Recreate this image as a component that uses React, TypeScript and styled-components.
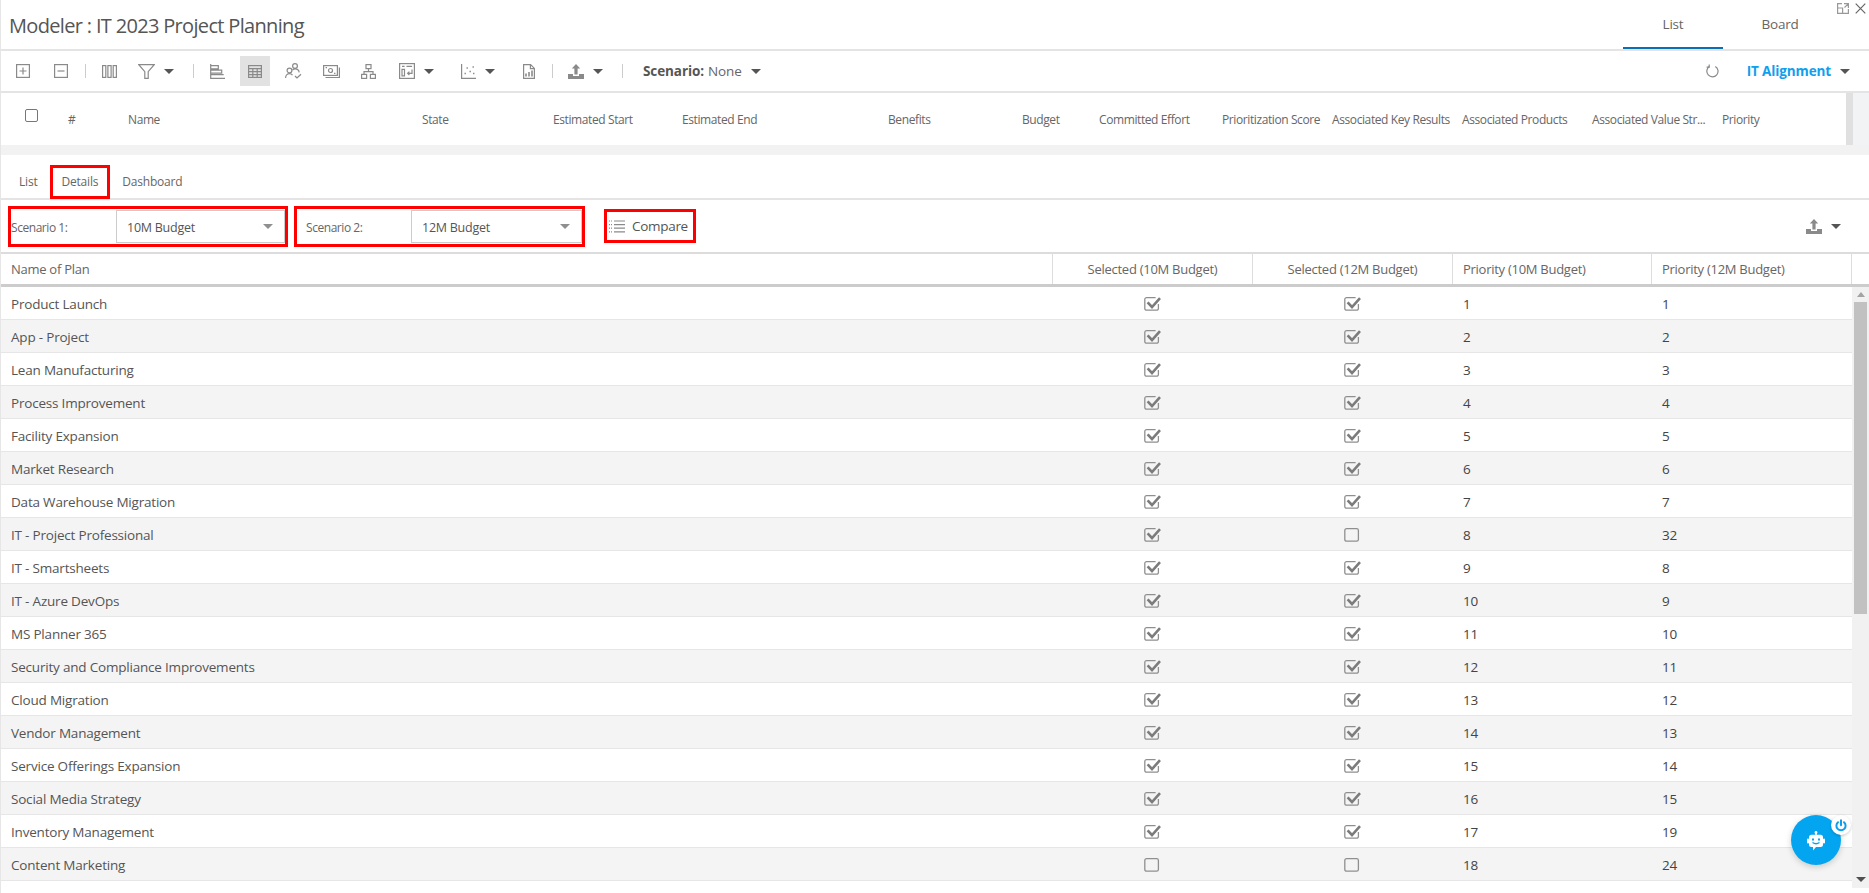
import * as React from 'react'
import styled, { createGlobalStyle } from 'styled-components'

const GlobalStyle = createGlobalStyle`
  html, body {
    margin: 0;
    padding: 0;
    background: #fff;
  }
  body {
    font-family: "Open Sans", "Noto Sans", "Liberation Sans", sans-serif;
    color: #555;
  }
  * { box-sizing: border-box; }
`

const Page = styled.div`
  position: relative;
  width: 1869px;
  height: 893px;
  overflow: hidden;
  display: flex;
  flex-direction: column;
  border-left: 1px solid #e6e6e6;
  background: #fff;
`

const TitleBar = styled.div`
  height: 51px;
  flex: none;
  display: flex;
  align-items: stretch;
  justify-content: space-between;
  border-bottom: 2px solid #e4e4e4;
`

const Title = styled.div`
  font-size: 20px;
  letter-spacing: -0.67px;
  color: #555;
  padding: 12px 0 0 8px;
`

const ViewTabs = styled.div`
  display: flex;
  margin-right: 32px;
`

const ViewTab = styled.div<{ $active?: boolean }>`
  width: ${p => (p.$active ? 100 : 114)}px;
  height: 49px;
  padding-top: 15px;
  text-align: center;
  font-size: 13.5px;
  letter-spacing: -0.2px;
  color: #666;
  border-bottom: 2px solid ${p => (p.$active ? '#0b6fb8' : 'transparent')};
`

const WindowIcons = styled.div`
  position: absolute;
  top: 3px;
  right: 3px;
  display: flex;
  gap: 6px;
  align-items: center;
`

const Toolbar = styled.div`
  height: 42px;
  flex: none;
  display: flex;
  align-items: center;
  padding: 0 19px 0 3px;
  border-bottom: 2px solid #e4e4e4;
`

const ToolSlot = styled.div<{ $w: number; $active?: boolean; $mr?: number }>`
  width: ${p => p.$w}px;
  height: 30px;
  flex: none;
  margin-right: ${p => p.$mr || 0}px;
  display: flex;
  align-items: center;
  justify-content: center;
  gap: 9px;
  background: ${p => (p.$active ? '#e2e2e2' : 'transparent')};
`

const ToolSep = styled.div`
  width: 1px;
  height: 14px;
  background: #ccc;
`

const Caret = styled.span<{ $color?: string }>`
  display: inline-block;
  width: 0;
  height: 0;
  flex: none;
  border-left: 5px solid transparent;
  border-right: 5px solid transparent;
  border-top: 5px solid ${p => p.$color || '#555'};
`

const ScenarioPick = styled.div`
  display: flex;
  align-items: center;
  margin-left: 10px;
  font-size: 13.5px;
  letter-spacing: -0.1px;
  color: #666;
  b {
    font-weight: 700;
    color: #555;
    margin-right: 4px;
  }
  ${Caret} { margin-left: 9px; }
`

const ToolRight = styled.div`
  margin-left: auto;
  display: flex;
  align-items: center;
`

const Alignment = styled.span`
  margin: 0 9px 0 28px;
  font-size: 13.5px;
  font-weight: 700;
  letter-spacing: -0.12px;
  color: #0ea0ee;
`

const ListHeadWrap = styled.div`
  height: 52px;
  flex: none;
  display: flex;
  background: #f2f3f4;
`

const ListHead = styled.div`
  width: 1845px;
  flex: none;
  display: grid;
  grid-template-columns: 43px 60px 294px 131px 129px 206px 134px 77px 123px 110px 130px 130px 130px 124px;
  align-items: center;
  padding-left: 24px;
  background: #fff;
  font-size: 12px;
  letter-spacing: -0.4px;
  color: #666;
  white-space: nowrap;
  span { padding-top: 1px; }
`

const HeadCheck = styled.div`
  width: 13px;
  height: 13px;
  margin-bottom: 8px;
  border: 1px solid #777;
  border-radius: 2px;
`

const HeadScroll = styled.div`
  width: 7px;
  background: #e0e0e0;
`

const Band = styled.div`
  height: 10px;
  flex: none;
  background: #f2f2f2;
`

const SubTabs = styled.div`
  height: 45px;
  flex: none;
  display: flex;
  align-items: flex-end;
  padding: 0 0 0 6px;
  border-bottom: 2px solid #e4e4e4;
`

const SubTab = styled.div<{ $marked?: boolean }>`
  height: 34px;
  padding: 0 9px 2px;
  margin-bottom: -1px;
  display: flex;
  align-items: center;
  font-size: 12px;
  letter-spacing: -0.2px;
  color: #666;
  border: 3px solid ${p => (p.$marked ? '#f00' : 'transparent')};
`

const FilterBar = styled.div`
  height: 52px;
  flex: none;
  display: flex;
  align-items: center;
  padding: 0 20px 0 7px;
`

const ScenarioBox = styled.div<{ $w: number; $pad: number; $mr: number }>`
  width: ${p => p.$w}px;
  height: 41px;
  flex: none;
  margin-right: ${p => p.$mr}px;
  display: grid;
  grid-template-columns: 105px 1fr;
  align-items: center;
  padding-left: ${p => p.$pad}px;
  border: 3px solid #f00;
`

const ScenarioLabel = styled.span`
  padding-top: 2px;
  font-size: 12px;
  letter-spacing: -0.45px;
  color: #666;
`

const SelectBox = styled.div`
  height: 33px;
  display: flex;
  align-items: center;
  justify-content: space-between;
  padding: 2px 11px 0 10px;
  border: 1px solid #ccc;
  font-size: 12.5px;
  letter-spacing: -0.25px;
  color: #555;
  ${Caret} { margin-top: -2px; }
`

const CompareBox = styled.div`
  width: 92px;
  height: 34px;
  flex: none;
  display: flex;
  align-items: center;
  gap: 7px;
  padding-left: 2px;
  border: 3px solid #f00;
  font-size: 13.5px;
  letter-spacing: -0.3px;
  color: #555;
`

const ExportWrap = styled.div`
  margin-left: auto;
  display: flex;
  align-items: center;
  gap: 9px;
  padding-right: 8px;
`

const GridHead = styled.div`
  height: 35px;
  flex: none;
  display: grid;
  grid-template-columns: 1052px 200px 200px 199px 200px 1fr;
  align-items: stretch;
  border-top: 2px solid #dcdcdc;
  border-bottom: 3px solid #ccc;
  font-size: 13px;
  letter-spacing: -0.27px;
  color: #666;
`

const HeadCell = styled.div<{ $center?: boolean }>`
  display: flex;
  align-items: center;
  justify-content: ${p => (p.$center ? 'center' : 'flex-start')};
  padding-left: ${p => (p.$center ? 0 : 10)}px;
  border-right: 1px solid #ddd;
`

const GridBody = styled.div`
  height: 601px;
  flex: none;
  display: flex;
`

const Rows = styled.div`
  width: 1851px;
  flex: none;
  overflow: hidden;
`

const Row = styled.div<{ $even: boolean }>`
  height: 33px;
  padding-top: 2px;
  display: grid;
  grid-template-columns: 1052px 200px 200px 199px 200px;
  align-items: center;
  background: ${p => (p.$even ? '#f4f4f4' : '#fff')};
  border-bottom: 1px solid #e6e6e6;
  font-size: 13.5px;
  letter-spacing: -0.2px;
  color: #555;
`

const NameCell = styled.div`
  padding-left: 10px;
`

const CheckCell = styled.div`
  display: flex;
  justify-content: center;
  margin: -2px 0 0 -1px;
`

const NumCell = styled.div`
  padding-left: 10px;
  color: #444;
`

const ScrollTrack = styled.div`
  flex: 1;
  display: flex;
  flex-direction: column;
  align-items: center;
  background: #f1f1f1;
  padding: 5px 0 6px;
`

const ScrollThumb = styled.div`
  width: 13px;
  height: 312px;
  margin: 5px 0 auto;
  background: #c1c1c1;
`

const ArrowUp = styled.span`
  width: 0;
  height: 0;
  border-left: 4px solid transparent;
  border-right: 4px solid transparent;
  border-bottom: 5px solid #a3a3a3;
`

const ArrowDown = styled.span`
  width: 0;
  height: 0;
  border-left: 5px solid transparent;
  border-right: 5px solid transparent;
  border-top: 5px solid #505050;
`

const ChatButton = styled.div`
  position: absolute;
  left: 1790px;
  top: 815px;
  width: 50px;
  height: 50px;
  display: flex;
  align-items: center;
  justify-content: center;
  border-radius: 50%;
  background: #03a5f0;
  box-shadow: 0 2px 6px rgba(0, 0, 0, 0.18);
`

const PowerBadge = styled.div`
  position: absolute;
  top: 0;
  right: -10px;
  width: 20px;
  height: 20px;
  display: flex;
  align-items: center;
  justify-content: center;
  border-radius: 50%;
  background: #fff;
  box-shadow: 0 1px 3px rgba(0, 0, 0, 0.2);
`

const Svg = styled.svg`
  display: block;
  flex: none;
  fill: none;
  stroke: #8a8a8a;
  stroke-width: 1.2;
`

// toolbar drawings
const PlusBox = () => (
  <Svg width="14" height="14" viewBox="0 0 14 14"><rect x=".6" y=".6" width="12.8" height="12.8" /><path d="M3.5 7h7M7 3.5v7" /></Svg>
)
const MinusBox = () => (
  <Svg width="14" height="14" viewBox="0 0 14 14"><rect x=".6" y=".6" width="12.8" height="12.8" /><path d="M3.5 7h7" /></Svg>
)
const ColumnsIcon = () => (
  <Svg width="15" height="13" viewBox="0 0 15 13"><rect x=".6" y=".6" width="3.2" height="11.8" /><rect x="5.9" y=".6" width="3.2" height="11.8" /><rect x="11.2" y=".6" width="3.2" height="11.8" /></Svg>
)
const FunnelIcon = () => (
  <Svg width="17" height="15" viewBox="0 0 17 15"><path d="M.8.7h15.4L10.2 7.6v6.7H6.8V7.6z" /></Svg>
)
const AlignIcon = () => (
  <Svg width="15" height="15" viewBox="0 0 15 15"><path d="M.7 0v14.3H15M.7 1.6h7.6v3.2H.7M.7 6.2h11v3H.7M.7 10.6h13" /></Svg>
)
const GridIcon = () => (
  <Svg width="14" height="13" viewBox="0 0 14 13"><rect x=".6" y=".6" width="12.8" height="11.8" /><path d="M.6 3.6h12.8M.6 6.6h12.8M.6 9.6h12.8M4.8 3.6v8.8M9.2 3.6v8.8" /></Svg>
)
const UsersIcon = () => (
  <Svg width="17" height="16" viewBox="0 0 17 16"><circle cx="10" cy="3" r="2.4" /><circle cx="4.5" cy="7.5" r="2.4" /><path d="M.6 15c0-2.8 1.6-4.3 3.9-4.3 1.2 0 2.3.5 3 1.4M7.5 7c.8-.8 1.5-1.2 2.5-1.2 2.4 0 3.9 1.4 4.2 3.6M10 13l2 2 4-3.8" /></Svg>
)
const MoneyIcon = () => (
  <Svg width="17" height="13" viewBox="0 0 17 13"><rect x=".6" y=".6" width="13.8" height="9.8" /><circle cx="7.5" cy="5.5" r="2" /><path d="M2.6 2.6h1.4M11 8.4h1.4M16.4 2.5v10H2.5" /></Svg>
)
const TreeIcon = () => (
  <Svg width="15" height="15" viewBox="0 0 15 15"><rect x="5" y=".6" width="5" height="4" /><rect x=".6" y="10.4" width="5" height="4" /><rect x="9.4" y="10.4" width="5" height="4" /><path d="M7.5 4.6v3M3 10.4V7.6h9v2.8" /></Svg>
)
const KanbanIcon = () => (
  <Svg width="16" height="16" viewBox="0 0 16 16"><rect x=".6" y=".6" width="14.8" height="14.8" /><path d="M3 3.4h2.6M7.5 3.4h5.6M3 6.4h2.5v6.5H3zM13 6.5v3.8H8.6M10.4 8.6 8.6 10.3l1.8 1.7" /></Svg>
)
const ScatterIcon = () => (
  <Svg width="15" height="15" viewBox="0 0 15 15"><path d="M.6 0v14.4H15" /><path d="M3.5 9.5h1.4M5.5 4h1.4M8.5 7.5h1.4M11.5 3h1.4M12 9.5h1.4" strokeWidth="1.6" /></Svg>
)
const DocChartIcon = () => (
  <Svg width="12" height="15" viewBox="0 0 12 15"><path d="M.6.6h7l3.8 3.8v10H.6zM7.4.6v4h4" /><path d="M3 12.6V9.5M6 12.6V8M9 12.6V6.5" strokeWidth="1.6" /></Svg>
)
const UploadIcon = () => (
  <svg width="16" height="15" viewBox="0 0 16 15" style={{ display: 'block', flex: 'none' }} fill="#8a8a8a">
    <path d="M8 0l4.2 4.6H9.6v6H6.4v-6H3.8zM0 10h5v2h6v-2h5v5H0z" />
  </svg>
)
const RefreshIcon = () => (
  <Svg width="13" height="14" viewBox="0 0 13 14"><path d="M9.3 2.4A5.6 5.6 0 1 1 3.4 2.5" /><path d="M3.2 .4v2.7H.6" /></Svg>
)
const CompareIcon = () => (
  <Svg width="16" height="13" viewBox="0 0 16 13"><path d="M5 1h11M5 4.6h11M5 8.2h11M5 11.8h11" /><path d="M0 1h3M0 4.6h3M0 8.2h3M0 11.8h3" strokeDasharray="1 1" /></Svg>
)
const RestoreIcon = () => (
  <Svg width="12" height="11" viewBox="0 0 12 11"><path d="M5 .6H.6v9.8h10.8V6" stroke="#999" /><path d="M.6 5h5v5.4M7 .6h4.4V5M11.2.8 7.5 4.5" stroke="#999" /></Svg>
)
const CloseIcon = () => (
  <Svg width="11" height="11" viewBox="0 0 11 11"><path d="M.7.7l9.6 9.6M10.3.7.7 10.3" stroke="#666" /></Svg>
)
const CheckBox = ({ on }: { on: boolean }) => (
  <Svg width="17" height="15" viewBox="0 0 17 15">
    {on ? (
      <>
        <path d="M14.4 8v4.4a1.8 1.8 0 0 1-1.8 1.8H2.6a1.8 1.8 0 0 1-1.8-1.8V3.4a1.8 1.8 0 0 1 1.8-1.8h9" stroke="#8f8f8f" strokeWidth="1.3" />
        <path d="M3.6 6.4l4.4 4.6L16 2.2" stroke="#7c7c7c" strokeWidth="2.6" />
      </>
    ) : (
      <rect x=".8" y="1.6" width="13.6" height="12.6" rx="1.8" stroke="#8f8f8f" strokeWidth="1.3" />
    )}
  </Svg>
)
const BotIcon = () => (
  <svg width="18" height="20" viewBox="0 0 18 20" style={{ display: 'block', marginTop: 2 }}>
    <circle cx="9" cy="1.4" r="1.4" fill="#fff" />
    <rect x="8.3" y="1.4" width="1.4" height="3" fill="#fff" />
    <rect x="0" y="7.5" width="2" height="5" rx="1" fill="#fff" />
    <rect x="16" y="7.5" width="2" height="5" rx="1" fill="#fff" />
    <path d="M4.5 3.8h9A2.5 2.5 0 0 1 16 6.3v7.2a2.5 2.5 0 0 1-2.5 2.5H9l-3 3.6V16H4.5A2.5 2.5 0 0 1 2 13.500V6.300A2.500 2.500 0 0 1 4.500 3.800z" fill="#fff" />
    <rect x="5" y="7.500" width="2" height="2" fill="#03a5f0" />
    <rect x="11" y="7.500" width="2" height="2" fill="#03a5f0" />
    <path d="M5.500 11.500c2 1.400 5 1.400 7 0" stroke="#03a5f0" strokeWidth="1.300" fill="none" />
  </svg>
)
const PowerIcon = () => (
  <svg width="12" height="13" viewBox="0 0 12 13" style={{ display: 'block' }} fill="none" stroke="#0ea0ee" strokeWidth="2" strokeLinecap="round">
    <path d="M6 1.200v5M3 3.200a4.600 4.600 0 1 0 6 0" />
  </svg>
)

const listColumns = ['#', 'Name', 'State', 'Estimated Start', 'Estimated End', 'Benefits', 'Budget', 'Committed Effort', 'Prioritization Score', 'Associated Key Results', 'Associated Products', 'Associated Value Str...', 'Priority']

type Plan = { name: string; a: boolean; b: boolean; p1: number; p2: number }

const plans: Plan[] = [
  { name: 'Product Launch', a: true, b: true, p1: 1, p2: 1 },
  { name: 'App - Project', a: true, b: true, p1: 2, p2: 2 },
  { name: 'Lean Manufacturing', a: true, b: true, p1: 3, p2: 3 },
  { name: 'Process Improvement', a: true, b: true, p1: 4, p2: 4 },
  { name: 'Facility Expansion', a: true, b: true, p1: 5, p2: 5 },
  { name: 'Market Research', a: true, b: true, p1: 6, p2: 6 },
  { name: 'Data Warehouse Migration', a: true, b: true, p1: 7, p2: 7 },
  { name: 'IT - Project Professional', a: true, b: false, p1: 8, p2: 32 },
  { name: 'IT - Smartsheets', a: true, b: true, p1: 9, p2: 8 },
  { name: 'IT - Azure DevOps', a: true, b: true, p1: 10, p2: 9 },
  { name: 'MS Planner 365', a: true, b: true, p1: 11, p2: 10 },
  { name: 'Security and Compliance Improvements', a: true, b: true, p1: 12, p2: 11 },
  { name: 'Cloud Migration', a: true, b: true, p1: 13, p2: 12 },
  { name: 'Vendor Management', a: true, b: true, p1: 14, p2: 13 },
  { name: 'Service Offerings Expansion', a: true, b: true, p1: 15, p2: 14 },
  { name: 'Social Media Strategy', a: true, b: true, p1: 16, p2: 15 },
  { name: 'Inventory Management', a: true, b: true, p1: 17, p2: 19 },
  { name: 'Content Marketing', a: false, b: false, p1: 18, p2: 24 },
]

export default function App() {
  return (
    <Page>
      <GlobalStyle />
      <TitleBar>
        <Title>Modeler : IT 2023 Project Planning</Title>
        <ViewTabs>
          <ViewTab $active>List</ViewTab>
          <ViewTab>Board</ViewTab>
        </ViewTabs>
      </TitleBar>
      <WindowIcons>
        <RestoreIcon />
        <CloseIcon />
      </WindowIcons>

      <Toolbar>
        <ToolSlot $w={38}><PlusBox /></ToolSlot>
        <ToolSlot $w={38}><MinusBox /></ToolSlot>
        <ToolSlot $w={10}><ToolSep /></ToolSlot>
        <ToolSlot $w={39}><ColumnsIcon /></ToolSlot>
        <ToolSlot $w={54}><FunnelIcon /><Caret /></ToolSlot>
        <ToolSlot $w={20}><ToolSep /></ToolSlot>
        <ToolSlot $w={28} $mr={9}><AlignIcon /></ToolSlot>
        <ToolSlot $w={30} $active><GridIcon /></ToolSlot>
        <ToolSlot $w={46}><UsersIcon /></ToolSlot>
        <ToolSlot $w={30}><MoneyIcon /></ToolSlot>
        <ToolSlot $w={45}><TreeIcon /></ToolSlot>
        <ToolSlot $w={51}><KanbanIcon /><Caret /></ToolSlot>
        <ToolSlot $w={72}><ScatterIcon /><Caret /></ToolSlot>
        <ToolSlot $w={30}><DocChartIcon /></ToolSlot>
        <ToolSlot $w={16}><ToolSep /></ToolSlot>
        <ToolSlot $w={51}><UploadIcon /><Caret /></ToolSlot>
        <ToolSlot $w={22}><ToolSep /></ToolSlot>
        <ScenarioPick><b>Scenario:</b> None <Caret /></ScenarioPick>
        <ToolRight>
          <RefreshIcon />
          <Alignment>IT Alignment</Alignment>
          <Caret />
        </ToolRight>
      </Toolbar>

      <ListHeadWrap>
        <ListHead>
          <HeadCheck />
          {listColumns.map(c => <span key={c}>{c}</span>)}
        </ListHead>
        <HeadScroll />
      </ListHeadWrap>
      <Band />

      <SubTabs>
        <SubTab>List</SubTab>
        <SubTab $marked>Details</SubTab>
        <SubTab>Dashboard</SubTab>
      </SubTabs>

      <FilterBar>
        <ScenarioBox $w={280} $pad={0} $mr={6}>
          <ScenarioLabel>Scenario 1:</ScenarioLabel>
          <SelectBox>10M Budget <Caret $color="#8f8f8f" /></SelectBox>
        </ScenarioBox>
        <ScenarioBox $w={291} $pad={9} $mr={19}>
          <ScenarioLabel>Scenario 2:</ScenarioLabel>
          <SelectBox>12M Budget <Caret $color="#8f8f8f" /></SelectBox>
        </ScenarioBox>
        <CompareBox><CompareIcon />Compare</CompareBox>
        <ExportWrap><UploadIcon /><Caret /></ExportWrap>
      </FilterBar>

      <GridHead>
        <HeadCell>Name of Plan</HeadCell>
        <HeadCell $center>Selected (10M Budget)</HeadCell>
        <HeadCell $center>Selected (12M Budget)</HeadCell>
        <HeadCell>Priority (10M Budget)</HeadCell>
        <HeadCell>Priority (12M Budget)</HeadCell>
      </GridHead>

      <GridBody>
        <Rows>
          {plans.map((p, i) => (
            <Row key={p.name} $even={i % 2 === 1}>
              <NameCell>{p.name}</NameCell>
              <CheckCell><CheckBox on={p.a} /></CheckCell>
              <CheckCell><CheckBox on={p.b} /></CheckCell>
              <NumCell>{p.p1}</NumCell>
              <NumCell>{p.p2}</NumCell>
            </Row>
          ))}
        </Rows>
        <ScrollTrack>
          <ArrowUp />
          <ScrollThumb />
          <ArrowDown />
        </ScrollTrack>
      </GridBody>

      <ChatButton>
        <BotIcon />
        <PowerBadge><PowerIcon /></PowerBadge>
      </ChatButton>
    </Page>
  )
}
